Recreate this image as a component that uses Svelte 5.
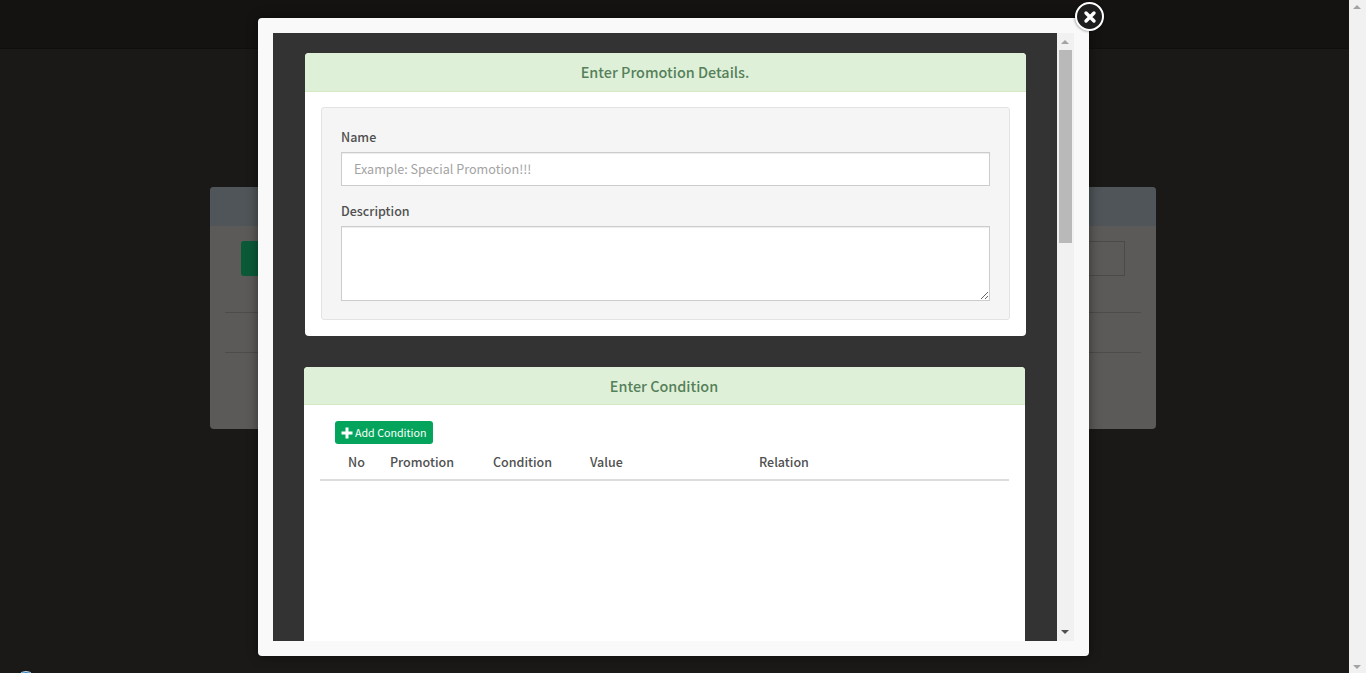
<script>
  const columns = [
    { label: 'No', width: 42 },
    { label: 'Promotion', width: 103 },
    { label: 'Condition', width: 97 },
    { label: 'Value', width: 169 },
    { label: 'Relation', width: 100 }
  ];
</script>

<div class="page">
  <header class="topbar"></header>
  <main class="backdrop-panel">
    <div class="panel-head"></div>
    <div class="panel-body">
      <div class="panel-tools">
        <div class="ghost-btn"></div>
        <div class="ghost-search"></div>
      </div>
      <div class="ghost-row"></div>
      <div class="ghost-row"></div>
    </div>
  </main>
  <div class="page-scroll">
    <span class="arrow up"></span>
    <span class="arrow down"></span>
  </div>
  <div class="chat-bubble"></div>
</div>

<div class="modal">
  <button class="close" aria-label="Close">
    <svg viewBox="0 0 16 16" width="16" height="16">
      <path d="M4 4l8 8M12 4l-8 8" stroke="#fff" stroke-width="3.4" stroke-linecap="round" />
    </svg>
  </button>
  <div class="frame">
    <div class="content">
      <section class="card first">
        <h2>Enter Promotion Details.</h2>
        <div class="card-body">
          <div class="well">
            <label for="promo-name">Name</label>
            <input id="promo-name" type="text" placeholder="Example: Special Promotion!!!" />
            <label for="promo-desc">Description</label>
            <textarea id="promo-desc"></textarea>
          </div>
        </div>
      </section>

      <section class="card second">
        <h2>Enter Condition</h2>
        <div class="card-body">
          <button class="add">
            <svg viewBox="0 0 12 12" width="12" height="12">
              <path d="M6 0.5v11M0.5 6h11" stroke="#fff" stroke-width="3" />
            </svg>
            Add Condition
          </button>
          <div class="thead">
            {#each columns as col}
              <div class="th" style="width: {col.width}px">{col.label}</div>
            {/each}
          </div>
        </div>
      </section>
    </div>
    <div class="frame-scroll">
      <span class="arrow up"></span>
      <div class="thumb"></div>
      <span class="arrow down"></span>
    </div>
  </div>
</div>

<style>
  :global(body) {
    margin: 0;
    background: #1a1917;
    font-family: "Noto Sans CJK SC", "Noto Sans", sans-serif;
    overflow: hidden;
  }

  .page {
    height: 673px;
    position: relative;
    overflow: hidden;
  }

  .topbar {
    height: 48px;
    background: #141312;
    border-bottom: 1px solid #0f0f0e;
  }

  .backdrop-panel {
    width: 946px;
    height: 242px;
    margin: 138px 0 0 210px;
    border-radius: 4px;
    overflow: hidden;
    background: #5c5a58;
  }

  .panel-head {
    height: 39px;
    background: #4f5558;
  }

  .panel-body {
    padding: 15px 15px 0;
  }

  .panel-tools {
    display: flex;
    justify-content: space-between;
    padding: 0 16px;
    height: 35px;
    margin-bottom: 36px;
  }

  .ghost-btn {
    width: 60px;
    background: #0b5a37;
    border-radius: 3px;
  }

  .ghost-search {
    width: 200px;
    border: 1px solid #4b4a48;
    box-sizing: border-box;
  }

  .ghost-row {
    height: 39px;
    border-top: 1px solid #4d4c4a;
  }

  .page-scroll {
    position: absolute;
    top: 0;
    right: 0;
    bottom: 0;
    width: 17px;
    background: #f1f1f1;
  }

  .arrow {
    position: absolute;
    left: 4px;
    width: 0;
    height: 0;
    border-left: 4px solid transparent;
    border-right: 4px solid transparent;
  }

  .arrow.up {
    top: 5px;
    border-bottom: 4px solid #a3a3a3;
  }

  .arrow.down {
    bottom: 4px;
    border-top: 4px solid #a3a3a3;
  }

  .frame-scroll .arrow.up {
    top: 7px;
  }

  .frame-scroll .arrow.down {
    bottom: 7px;
    border-top-color: #505050;
  }

  .chat-bubble {
    position: absolute;
    left: 16px;
    top: 671px;
    width: 20px;
    height: 20px;
    border-radius: 50%;
    background: #2f7fc1;
    border: 1px solid #bcdcf2;
    box-sizing: border-box;
  }

  .modal {
    position: fixed;
    left: 258px;
    top: 18px;
    width: 831px;
    height: 638px;
    box-sizing: border-box;
    padding: 15px;
    background: #f9f9f9;
    border-radius: 4px;
    box-shadow: 0 0 12px rgba(0, 0, 0, 0.45);
  }

  .close {
    position: absolute;
    top: -16px;
    right: -15px;
    padding: 0;
    display: flex;
    align-items: center;
    justify-content: center;
    background: #1e1e1e;
    border: 2px solid #fff;
    border-radius: 50%;
    box-shadow: 0 0 3px rgba(0, 0, 0, 0.6);
    box-sizing: content-box;
    width: 25px;
    height: 25px;
  }

  .frame {
    display: flex;
    height: 608px;
    overflow: hidden;
  }

  .content {
    width: 784px;
    height: 608px;
    background: #333;
    padding: 20px 31px 0;
    box-sizing: border-box;
    overflow: hidden;
  }

  .frame-scroll {
    position: relative;
    width: 17px;
    background: #f1f1f1;
  }

  .thumb {
    position: absolute;
    top: 17px;
    left: 2px;
    width: 13px;
    height: 193px;
    background: #b9b9b9;
  }

  .card {
    background: #fff;
    border-radius: 4px;
    overflow: hidden;
  }

  .card.first {
    width: 721px;
    margin-left: 1px;
    height: 283px;
  }

  .card.second {
    width: 721px;
    margin-top: 31px;
    height: 400px;
  }

  h2 {
    margin: 0;
    height: 38px;
    line-height: 38px;
    padding-right: 1px;
    background: #dff0d8;
    border-bottom: 1px solid #d6e9c6;
    color: #55805a;
    font-size: 14.4px;
    font-weight: 500;
    text-align: center;
  }

  .second h2 {
    height: 37px;
  }

  .first .card-body {
    padding: 15px 16px;
  }

  .well {
    box-sizing: border-box;
    height: 213px;
    padding: 19px 19px 0;
    background: #f5f5f5;
    border: 1px solid #e3e3e3;
    border-radius: 3px;
  }

  label {
    display: block;
    height: 25px;
    line-height: 20px;
    font-size: 12.5px;
    font-weight: 500;
    color: #505050;
  }

  input,
  textarea {
    display: block;
    width: 100%;
    box-sizing: border-box;
    border: 1px solid #ccc;
    background: #fff;
    font: inherit;
    font-size: 12.6px;
    padding: 5px 12px 7px;
    color: #555;
    box-shadow: inset 0 1px 1px rgba(0, 0, 0, 0.075);
  }

  input {
    height: 34px;
    margin-bottom: 15px;
  }

  input::placeholder {
    color: #a3a3a3;
  }

  textarea {
    height: 75px;
  }

  .second .card-body {
    padding: 16px 16px 0;
  }

  .add {
    display: flex;
    align-items: center;
    gap: 2px;
    height: 23px;
    margin-left: 15px;
    padding: 0 6px;
    border: 0;
    border-radius: 3px;
    background: #05a45c;
    color: #fff;
    font: inherit;
    font-size: 10.7px;
    font-weight: 400;
  }

  .thead {
    display: flex;
    height: 37px;
    align-items: center;
    border-bottom: 2px solid #ddd;
    box-sizing: border-box;
  }

  .th {
    font-size: 12.5px;
    font-weight: 500;
    color: #505050;
    box-sizing: border-box;
    padding-left: 28px;
  }
</style>
